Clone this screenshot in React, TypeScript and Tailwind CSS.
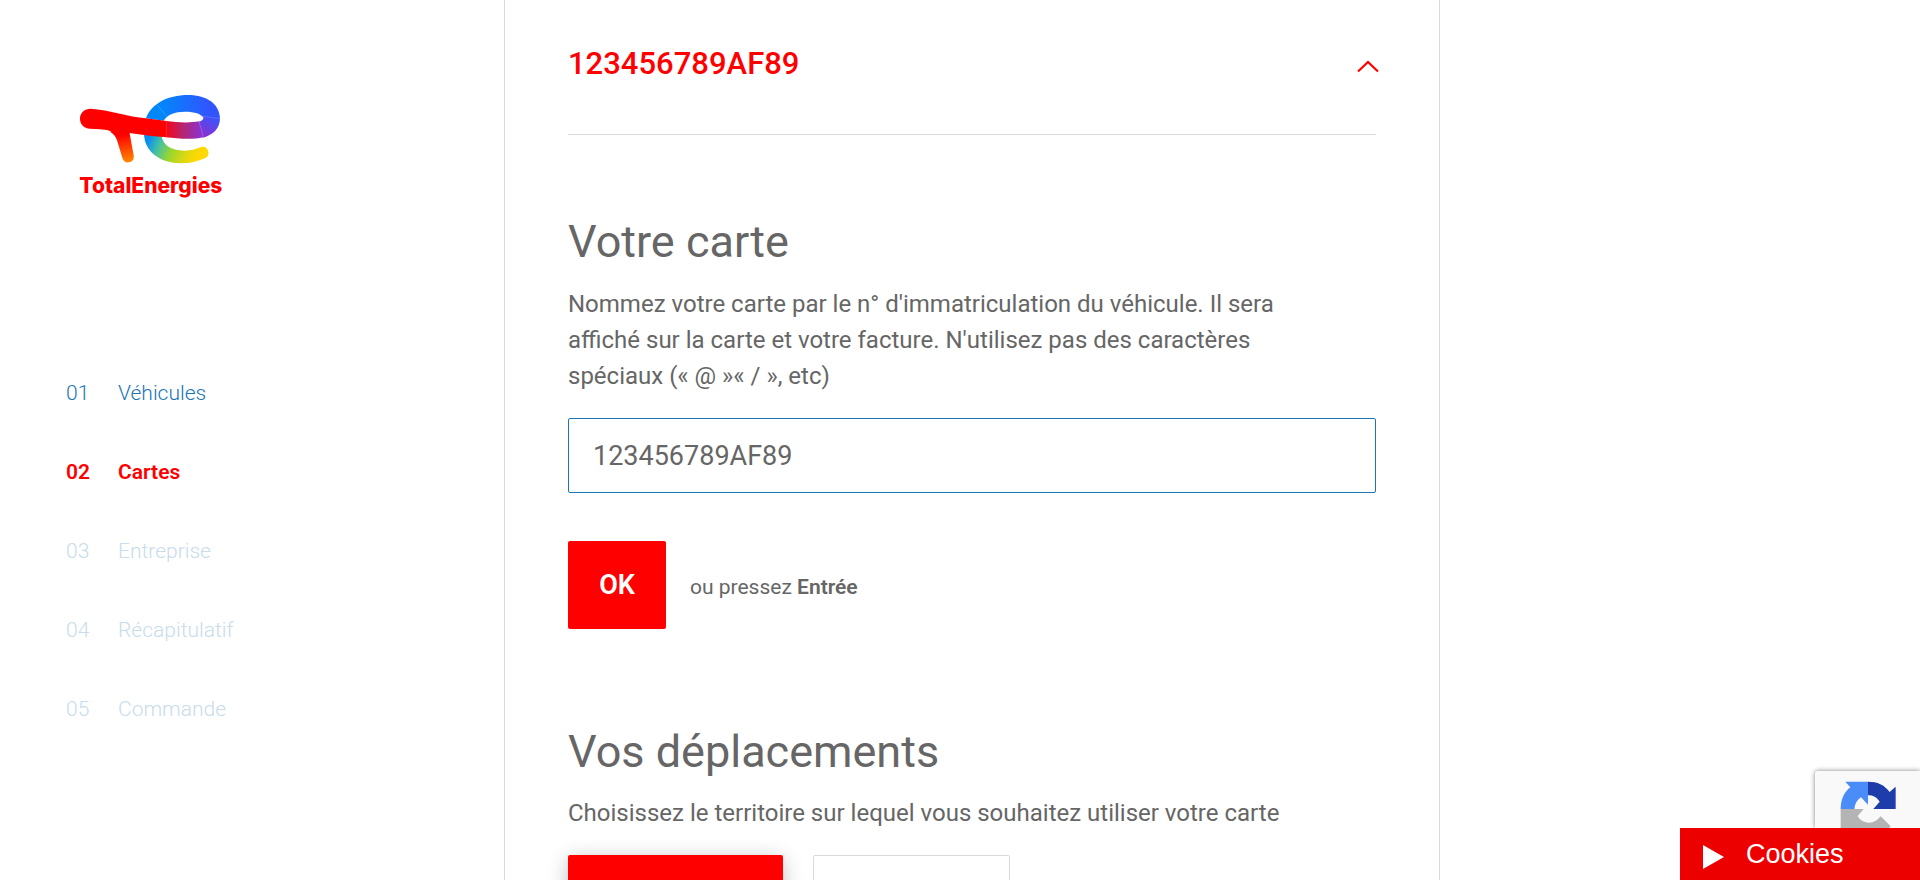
import { useState } from "react";

const steps = [
  { number: "01", label: "Véhicules", state: "done" },
  { number: "02", label: "Cartes", state: "current" },
  { number: "03", label: "Entreprise", state: "upcoming" },
  { number: "04", label: "Récapitulatif", state: "upcoming" },
  { number: "05", label: "Commande", state: "upcoming" },
] as const;

const stepStyles = {
  done: "font-light text-[#1a75b6]",
  current: "font-semibold text-[#ff0000]",
  upcoming: "font-light text-[#c8dcea]",
};

function Logo() {
  return (
    <svg className="h-[130px] w-[180px]" viewBox="0 0 540 390" role="img" aria-label="TotalEnergies">
      <defs>
        <linearGradient id="top" gradientUnits="userSpaceOnUse" x1="300" y1="90" x2="450" y2="90">
          <stop offset="0" stopColor="#0088fb" />
          <stop offset="1" stopColor="#3254ff" />
        </linearGradient>
        <linearGradient id="turn" gradientUnits="userSpaceOnUse" x1="425" y1="165" x2="450" y2="110">
          <stop offset="0" stopColor="#8c30cf" />
          <stop offset="1" stopColor="#3d52fa" />
        </linearGradient>
        <linearGradient id="cross" gradientUnits="userSpaceOnUse" x1="320" y1="150" x2="425" y2="150">
          <stop offset="0" stopColor="#f5061a" />
          <stop offset="0.45" stopColor="#b8246f" />
          <stop offset="1" stopColor="#8a32d2" />
        </linearGradient>
        <linearGradient id="tail" gradientUnits="userSpaceOnUse" x1="268" y1="172" x2="410" y2="232">
          <stop offset="0" stopColor="#0a8cf0" />
          <stop offset="0.22" stopColor="#3fc0a8" />
          <stop offset="0.5" stopColor="#9bd62e" />
          <stop offset="0.8" stopColor="#e0d810" />
          <stop offset="1" stopColor="#ffd800" />
        </linearGradient>
        <linearGradient id="leg" gradientUnits="userSpaceOnUse" x1="188" y1="165" x2="203" y2="248">
          <stop offset="0" stopColor="#ff0000" />
          <stop offset="1" stopColor="#ff8a00" />
        </linearGradient>
      </defs>
      <path fill="url(#tail)" d="M252 160C252 214 300 250 362 250C389 250 414 244 434 235C443 231 448 223 444 212C441 202 431 198 421 202C407 208 393 212 374 212C331 212 308 194 304 166Z" />
      <path fill="url(#top)" d="M258 115C273 72 322 45 384 45C443 45 480 74 480 117L429 112C425 102 404 95 375 95C344 95 323 103 311 122Z" />
      <path fill="url(#turn)" d="M480 115C480 145 460 165 429 173L417 125C427 122 433 117 429 109Z" />
      <path fill="url(#cross)" d="M318 123C354 128 392 129 418 124L430 172C397 180 354 176 318 172Z" />
      <path fill="url(#leg)" d="M150 155C163 164 167 169 171 181L187 233C190 244 198 249 207 247C218 245 223 237 221 226L208 155Z" />
      <path fill="#ff0000" d="M92 86C149 90 205 110 258 115L320 123V172C280 170 246 163 208 159L205 165H164C155 152 140 149 120 148L90 146C72 145 60 133 60 116C60 98 74 86 92 86Z" />
      <path fill="none" stroke="#ffffff" strokeOpacity="0.25" strokeWidth="2" d="M292 76L321 110M429 109L480 116M417 125L430 170M319 124V171" />
      <text x="58" y="340" fill="#ff0000" className="font-[Inter,sans-serif] text-[63px] font-extrabold">
        TotalEnergies
      </text>
    </svg>
  );
}

function RecaptchaMark() {
  return (
    <svg className="h-[57px] w-[57px]" viewBox="0 0 171 171" aria-hidden="true">
      <path fill="#b4b4b4" d="M2 84H71L53 105C62 120 75 125 87 125C101 125 111 119 122 106L152 136L140 150V171H2Z" />
      <path fill="#4b8df8" d="M84 2V71L63 49C51 57 44 70 43 84H2C2 55 13 33 31 19L16 2Z" />
      <path fill="#1f3cab" d="M84 2C112 2 133 11 149 33L167 17V84H100L119 62C110 48 99 43 84 43Z" />
    </svg>
  );
}

export default function App() {
  const [plate, setPlate] = useState("123456789AF89");

  return (
    <div className="flex h-screen overflow-hidden bg-white font-[Roboto,'Liberation_Sans',sans-serif] text-[#666666]">
      <aside className="w-[26.25%] shrink-0 pt-20">
        <a href="#accueil" className="ml-[60px] block w-[180px]">
          <Logo />
        </a>
        <nav aria-label="Étapes" className="mt-[168px] pl-[66px]">
          <ol className="flex flex-col gap-[49px]">
            {steps.map((step) => (
              <li key={step.number}>
                <a
                  href={"#etape-" + step.number}
                  aria-current={step.state === "current" ? "step" : undefined}
                  className={"flex text-[21px] leading-[30px] " + stepStyles[step.state]}
                >
                  <span className="w-[52px]">{step.number}</span>
                  <span>{step.label}</span>
                </a>
              </li>
            ))}
          </ol>
        </nav>
      </aside>

      <main className="w-[48.75%] shrink-0 border-x border-[#dadada] px-[63px]">
        <button type="button" aria-expanded="true" className="flex w-full items-center justify-between border-b border-[#dadada] pt-10 pb-[46px] text-left text-[31px] leading-[48px] font-medium text-[#ff0000]">
          <span>{plate}</span>
          <svg className="-mr-1 h-7 w-6" viewBox="0 0 24 28" fill="none" stroke="currentColor" strokeWidth="2.2" aria-hidden="true">
            <path d="M2 21.500L12 12L22 21.500" />
          </svg>
        </button>

        <form onSubmit={(event) => event.preventDefault()}>
          <h2 className="mt-[77px] text-[45px] leading-[60px]">Votre carte</h2>
          <label htmlFor="plate" className="mt-[14px] block max-w-[720px] text-[24px] leading-9">
            Nommez votre carte par le n° d'immatriculation du véhicule. Il sera affiché sur la carte et votre facture. N'utilisez pas des caractères spéciaux (« @ »« / », etc)
          </label>
          <input
            id="plate"
            type="text"
            value={plate}
            onChange={(event) => setPlate(event.target.value)}
            className="mt-6 block h-[75px] w-full rounded-[2px] border border-[#1a75b6] px-6 text-[27px] outline-none"
          />
          <div className="mt-12 flex items-center">
            <button type="submit" className="h-[88px] w-[98px] rounded-[2px] bg-[#ff0000] text-[27px] font-semibold text-white">
              OK
            </button>
            <p className="ml-6 pt-1 text-[21px] leading-[30px]">
              ou pressez <strong className="font-semibold">Entrée</strong>
            </p>
          </div>
        </form>

        <section aria-labelledby="territory">
          <h2 id="territory" className="mt-[93px] text-[45px] leading-[60px]">Vos déplacements</h2>
          <p className="mt-[13px] text-[24px] leading-9">Choisissez le territoire sur lequel vous souhaitez utiliser votre carte</p>
          <div className="mt-6 flex gap-[30px]">
            <button type="button" aria-label="Territoire national" aria-pressed="true" className="h-[88px] w-[215px] rounded-[2px] bg-[#ff0000] shadow-[0_4px_20px_rgba(0,0,0,0.25)]" />
            <button type="button" aria-label="Territoire européen" aria-pressed="false" className="h-[88px] w-[197px] rounded-[2px] border border-[#dadada] bg-white" />
          </div>
        </section>
      </main>

      <div className="fixed right-0 bottom-0 flex flex-col items-end">
        <div className="h-[57px] w-[105px] overflow-hidden rounded-tl-[3px] bg-[#f9f9f9] pt-[10px] pl-[25px] shadow-[0_0_5px_#808080]">
          <RecaptchaMark />
        </div>
        <button type="button" className="relative flex h-[52px] w-60 items-center bg-[#ed0000] pl-[23px] font-['Liberation_Sans',Arial,sans-serif] text-[27px] text-white">
          <svg className="mt-[6px] h-6 w-[21px]" viewBox="0 0 21 24" fill="currentColor" aria-hidden="true">
            <path d="M0 0L21 12L0 24Z" />
          </svg>
          <span className="ml-[22px]">Cookies</span>
        </button>
      </div>
    </div>
  );
}
